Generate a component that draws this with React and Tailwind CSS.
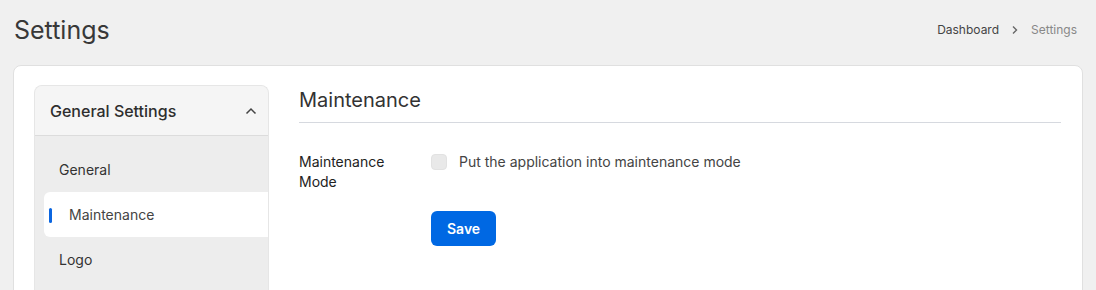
import React, { useState } from 'react';

const items = ['General', 'Maintenance', 'Logo'];

export default function App() {
  const [active, setActive] = useState('Maintenance');
  const [checked, setChecked] = useState(false);

  return (
    <div className="min-h-screen bg-[#f0f0f0] px-[13px] font-['Inter',sans-serif] text-[#333]">
      {/* header */}
      <div className="flex h-[60px] items-center justify-between pl-[1px] pr-[6px]">
        <h1 className="text-[25px] leading-none text-[#383838]">Settings</h1>
        <div className="flex items-center gap-[12px] text-[12px]">
          <span className="text-[#444]">Dashboard</span>
          <svg width="8" height="10" viewBox="0 0 8 10" fill="none" stroke="#666" strokeWidth="1.4">
            <path d="M2 1.5 5.5 5 2 8.5" />
          </svg>
          <span className="text-[#888]">Settings</span>
        </div>
      </div>

      {/* card */}
      <div className="mt-[5px] flex min-h-[300px] rounded-[8px] border border-[#e0e0e0] bg-white pl-[20px] pr-[21px] pt-[19px]">
        {/* sidebar */}
        <div className="w-[235px] shrink-0 overflow-hidden rounded-t-[8px] border border-b-0 border-[#e6e6e6] bg-[#ededed]">
          <div className="flex h-[50px] items-center justify-between border-b border-[#dcdcdc] bg-[#f5f5f5] pl-[15px] pr-[11px]">
            <span className="text-[16px] font-medium leading-[20px] text-[#2e2e2e]">General Settings</span>
            <svg width="12" height="8" viewBox="0 0 12 8" fill="none" stroke="#444" strokeWidth="1.5">
              <path d="M1.5 6.5 6 2l4.5 4.5" />
            </svg>
          </div>
          <div className="py-[11px] pl-[9px]">
            {items.map((it) => {
              const on = it === active;
              return (
                <button
                  key={it}
                  onClick={() => setActive(it)}
                  className={
                    on
                      ? 'relative flex h-[45px] w-full items-center rounded-l-[6px] bg-white pl-[25px] text-left text-[14px] text-[#444]'
                      : 'flex h-[45px] w-full items-center pl-[15px] text-left text-[14px] text-[#333]'
                  }
                >
                  {on && <span className="absolute left-[5px] top-[16px] h-[15px] w-[3px] rounded-full bg-[#0b66e0]" />}
                  {it}
                </button>
              );
            })}
          </div>
        </div>

        {/* content */}
        <div className="ml-[30px] flex-1 pt-[1px]">
          <h2 className="pb-[8px] text-[20px] leading-[28px] text-[#333]">Maintenance</h2>
          <div className="h-px bg-[#d6d9df]" />
          <div className="mt-[29px] flex">
            <div className="w-[132px] text-[14px] leading-[20px] text-[#222]">
              Maintenance
              <br />
              Mode
            </div>
            <div>
              <label className="flex cursor-pointer items-center gap-[12px] text-[14px] leading-[20px] text-[#444]">
                <span
                  onClick={() => setChecked(!checked)}
                  className={checked ? 'h-[16px] w-[16px] rounded-[4px] bg-[#0b66e0]' : 'h-[16px] w-[16px] rounded-[4px] border border-[#e2e2e2] bg-[#e9e9e9]'}
                />
                Put the application into maintenance mode
              </label>
              <button className="mt-[39px] h-[35px] rounded-[6px] bg-[#0068e3] px-[16px] text-[14px] font-semibold text-white">
                Save
              </button>
            </div>
          </div>
        </div>
      </div>
    </div>
  );
}
